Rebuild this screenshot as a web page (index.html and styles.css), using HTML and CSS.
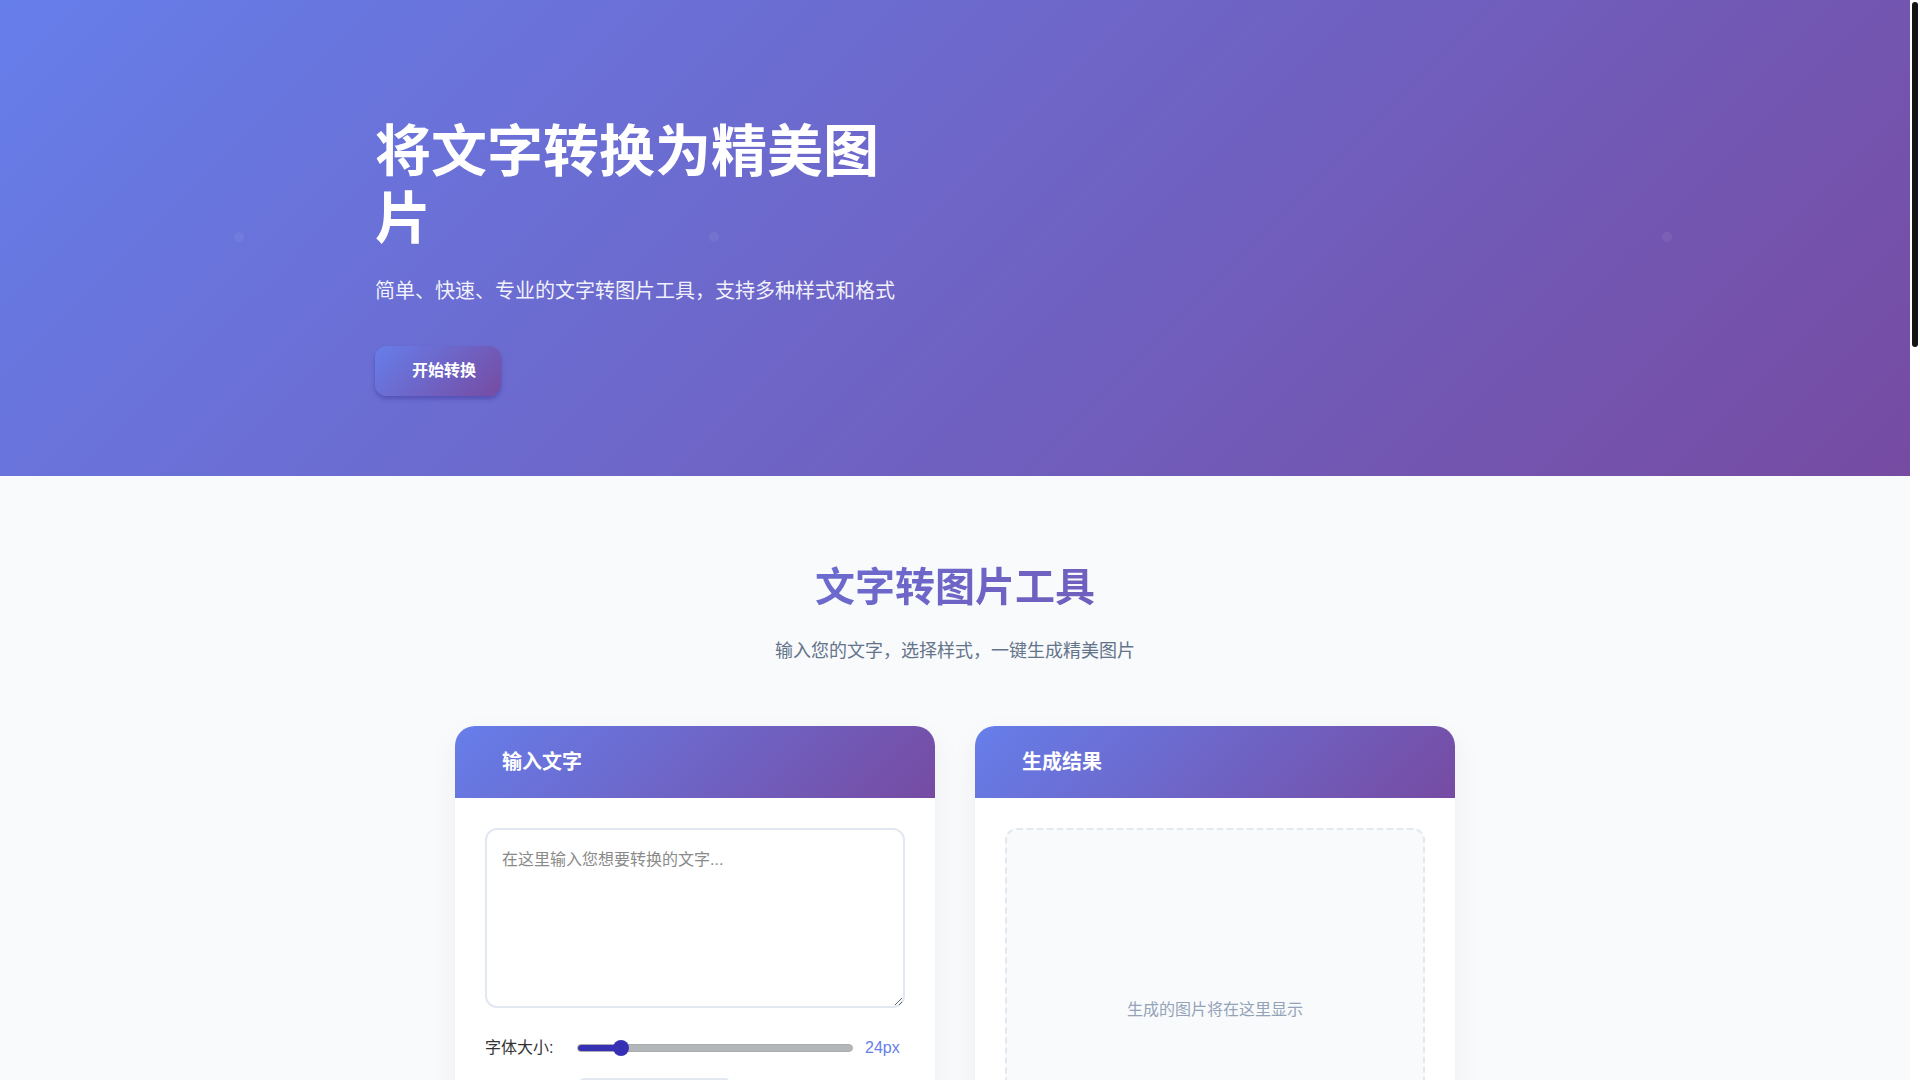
FILE: index.html
```html
<!DOCTYPE html>
<html lang="zh-CN">
<head>
<meta charset="UTF-8">
<title>文字转图片工具</title>
<link rel="stylesheet" href="styles.css">
</head>
<body>
<div class="scrollbar" aria-hidden="true"><span class="scrollbar-thumb"></span></div>

<section class="hero">
  <span class="particle p1"></span>
  <span class="particle p2"></span>
  <span class="particle p3"></span>
  <div class="container hero-grid">
    <div class="hero-text">
      <h1 class="hero-title">将文字转换为精美图片</h1>
      <p class="hero-sub">简单、快速、专业的文字转图片工具，支持多种样式和格式</p>
      <a class="btn-primary" href="#tool">开始转换</a>
    </div>
    <div class="hero-visual"></div>
  </div>
</section>

<section class="tool" id="tool">
  <div class="container">
    <h2 class="section-title">文字转图片工具</h2>
    <p class="section-sub">输入您的文字，选择样式，一键生成精美图片</p>
    <div class="tool-grid">
      <div class="panel">
        <div class="panel-header"><h3>输入文字</h3></div>
        <div class="panel-body">
          <textarea class="text-input" placeholder="在这里输入您想要转换的文字..."></textarea>
          <div class="control-row">
            <label class="control-label">字体大小:</label>
            <input type="range" class="range" min="12" max="100" value="24" style="--p: 0.136">
            <span class="control-value">24px</span>
          </div>
          <div class="control-row">
            <label class="control-label">字体样式:</label>
            <select class="select">
              <option>微软雅黑</option>
            </select>
          </div>
          <div class="control-row">
            <label class="control-label">文字颜色:</label>
            <span class="swatch swatch-dark"></span>
          </div>
          <div class="control-row">
            <label class="control-label">背景颜色:</label>
            <span class="swatch swatch-light"></span>
          </div>
          <div class="control-row">
            <label class="control-label">图片宽度:</label>
            <input type="range" class="range" min="200" max="1200" value="800" style="--p: 0.6">
            <span class="control-value">800px</span>
          </div>
          <button class="btn-generate">生成图片</button>
        </div>
      </div>
      <div class="panel">
        <div class="panel-header"><h3>生成结果</h3></div>
        <div class="panel-body">
          <div class="result-area">
            <p class="result-placeholder">生成的图片将在这里显示</p>
          </div>
          <div class="result-actions">
            <button class="btn-outline">下载 PNG</button>
            <button class="btn-outline">下载 JPG</button>
            <button class="btn-outline">复制图片</button>
          </div>
        </div>
      </div>
    </div>
  </div>
</section>

<section class="features">
  <div class="container">
    <h2 class="section-title">为什么选择我们</h2>
    <p class="section-sub">强大的功能，简洁的体验</p>
    <div class="feature-grid">
      <div class="feature-card"><div class="feature-icon"></div><h4>简单易用</h4><p>无需安装任何软件，打开网页即可使用，几秒钟完成转换。</p></div>
      <div class="feature-card"><div class="feature-icon"></div><h4>多种样式</h4><p>支持自定义字体、颜色、背景和尺寸，满足不同场景需求。</p></div>
      <div class="feature-card"><div class="feature-icon"></div><h4>高清输出</h4><p>生成高清图片，支持 PNG、JPG 等多种格式下载。</p></div>
      <div class="feature-card"><div class="feature-icon"></div><h4>安全可靠</h4><p>所有处理均在本地浏览器完成，保护您的隐私安全。</p></div>
      <div class="feature-card"><div class="feature-icon"></div><h4>完全免费</h4><p>所有功能免费使用，没有水印，没有次数限制。</p></div>
      <div class="feature-card"><div class="feature-icon"></div><h4>移动适配</h4><p>完美支持手机、平板等多种设备，随时随地使用。</p></div>
    </div>
  </div>
</section>

<footer class="footer">
  <div class="container">
    <p>© 2024 文字转图片工具. 保留所有权利.</p>
  </div>
</footer>
</body>
</html>
```

FILE: styles.css
```css
* {
  box-sizing: border-box;
}

html {
  margin: 0;
  padding: 0;
  background: #ffffff;
}

body {
  margin: 0 10px 0 0;
  padding: 0;
  font-family: "Liberation Sans", "Noto Sans CJK SC", sans-serif;
  color: #2d3748;
  background: #f8fafc;
  line-height: 1.6;
}

/* drawn scrollbar overlay at the right edge of the window */
.scrollbar {
  position: fixed;
  top: 0;
  right: 0;
  width: 10px;
  height: 100vh;
  background: #ffffff;
  z-index: 10;
}

.scrollbar-thumb {
  position: absolute;
  top: 2px;
  left: 2px;
  width: 6px;
  height: 345px;
  border-radius: 3px;
  background: #141414;
}

.container {
  max-width: 1200px;
  margin: 0 auto;
  padding: 0 20px;
}

/* Hero */
.hero {
  position: relative;
  overflow: hidden;
  height: 476px;
  padding-top: 118px;
  background: linear-gradient(135deg, #667eea 0%, #764ba2 100%);
  color: #ffffff;
}

.particle {
  position: absolute;
  width: 10px;
  height: 10px;
  border-radius: 50%;
  background: rgba(255, 255, 255, 0.06);
}

.p1 { left: 234px; top: 232px; }
.p2 { left: 709px; top: 232px; }
.p3 { left: 1662px; top: 232px; }

.hero-grid {
  display: grid;
  grid-template-columns: 1fr 1fr;
  gap: 64px;
  position: relative;
}

.hero-title {
  margin: 0 0 23px;
  font-size: 56px;
  line-height: 1.2;
  font-weight: 700;
  color: #ffffff;
}

.hero-sub {
  margin: 0 0 39px;
  font-size: 20px;
  line-height: 32px;
  color: rgba(255, 255, 255, 0.92);
}

.btn-primary {
  display: inline-block;
  padding: 16px 25px 16px 37px;
  font-size: 16px;
  line-height: 18px;
  font-weight: 700;
  color: #ffffff;
  text-decoration: none;
  border-radius: 12px;
  background: linear-gradient(135deg, #667eea 0%, #764ba2 100%);
  box-shadow: 0 3px 4px rgba(50, 40, 140, 0.4);
}

/* Tool section */
.tool {
  padding: 87px 0 90px;
}

.section-title {
  margin: 0 0 26px;
  text-align: center;
  font-size: 40px;
  line-height: 48px;
  font-weight: 700;
  background: linear-gradient(135deg, #667eea 0%, #764ba2 100%);
  -webkit-background-clip: text;
  background-clip: text;
  color: transparent;
}

.section-sub {
  margin: 0 0 61px;
  text-align: center;
  font-size: 18px;
  line-height: 28px;
  color: #64748b;
}

.tool-grid {
  display: grid;
  grid-template-columns: 1fr 1fr;
  gap: 40px;
  max-width: 1000px;
  margin: 0 auto;
}

.panel {
  background: #ffffff;
  border-radius: 20px;
  overflow: hidden;
  box-shadow: 0 10px 30px rgba(0, 0, 0, 0.05);
}

.panel-header {
  padding: 24px 24px 24px 47px;
  background: linear-gradient(135deg, #667eea 0%, #764ba2 100%);
}

.panel-header h3 {
  margin: 0;
  font-size: 20px;
  line-height: 24px;
  font-weight: 700;
  color: #ffffff;
}

.panel-body {
  padding: 30px;
}

.text-input {
  display: block;
  width: 100%;
  height: 180px;
  margin: 0 0 28px;
  padding: 17px 15px 15px;
  border: 2px solid #e2e8f0;
  border-radius: 12px;
  font-family: inherit;
  font-size: 16px;
  line-height: 1.6;
  color: #2d3748;
  resize: vertical;
  outline: none;
}

.text-input::placeholder {
  color: #8a8a8a;
}

.control-row {
  display: flex;
  align-items: center;
  gap: 12px;
  margin-bottom: 18px;
  min-height: 24px;
}

.control-label {
  width: 80px;
  flex-shrink: 0;
  font-size: 16px;
  line-height: 24px;
  font-weight: 400;
  color: #333333;
}

.control-value {
  min-width: 40px;
  font-size: 16px;
  line-height: 24px;
  color: #667eea;
}

.range {
  -webkit-appearance: none;
  appearance: none;
  flex: 1;
  min-width: 0;
  height: 8px;
  margin: 0;
  border-radius: 4px;
  border: 1px solid #a9acaf;
  background: linear-gradient(to right, #3730b5 0, #3730b5 calc(8px + var(--p) * (100% - 16px)), #b4b7ba calc(8px + var(--p) * (100% - 16px)), #b4b7ba 100%);
  outline: none;
}

.range::-webkit-slider-thumb {
  -webkit-appearance: none;
  appearance: none;
  width: 16px;
  height: 16px;
  border-radius: 50%;
  background: #3730b5;
  border: none;
  cursor: pointer;
}

.select {
  width: 155px;
  height: 40px;
  padding: 0 10px;
  border: 2px solid #e2e8f0;
  border-radius: 8px;
  background: #ffffff;
  font-family: inherit;
  font-size: 14px;
  color: #2d3748;
}

.swatch {
  display: inline-block;
  width: 50px;
  height: 32px;
  border-radius: 6px;
  border: 2px solid #e2e8f0;
}

.swatch-dark { background: #333333; }
.swatch-light { background: #ffffff; }

.btn-generate {
  display: block;
  width: 100%;
  margin-top: 24px;
  padding: 14px;
  border: none;
  border-radius: 12px;
  font-family: inherit;
  font-size: 16px;
  font-weight: 700;
  color: #ffffff;
  background: linear-gradient(135deg, #667eea 0%, #764ba2 100%);
}

.result-area {
  display: flex;
  align-items: center;
  justify-content: center;
  height: 364px;
  border: 2px dashed #e2e8f0;
  border-radius: 12px;
  background: #f8fafc;
}

.result-placeholder {
  margin: 0;
  font-size: 16px;
  line-height: 24px;
  color: #94a3b8;
}

.result-actions {
  display: flex;
  gap: 12px;
  margin-top: 24px;
}

.btn-outline {
  flex: 1;
  padding: 12px;
  border: 2px solid #667eea;
  border-radius: 10px;
  background: #ffffff;
  font-family: inherit;
  font-size: 15px;
  color: #667eea;
}

/* Features */
.features {
  padding: 90px 0 120px;
  background: #ffffff;
}

.feature-grid {
  display: grid;
  grid-template-columns: repeat(3, 1fr);
  gap: 32px;
  max-width: 1000px;
  margin: 0 auto;
}

.feature-card {
  padding: 40px 30px;
  border-radius: 20px;
  background: #f8fafc;
  text-align: center;
}

.feature-icon {
  width: 64px;
  height: 64px;
  margin: 0 auto 20px;
  border-radius: 16px;
  background: linear-gradient(135deg, #667eea 0%, #764ba2 100%);
}

.feature-card h4 {
  margin: 0 0 12px;
  font-size: 20px;
  color: #2d3748;
}

.feature-card p {
  margin: 0;
  font-size: 15px;
  color: #64748b;
}

.footer {
  padding: 60px 0;
  background: #2d3748;
  color: #cbd5e1;
  text-align: center;
  font-size: 14px;
}

.footer p {
  margin: 0;
}
```
